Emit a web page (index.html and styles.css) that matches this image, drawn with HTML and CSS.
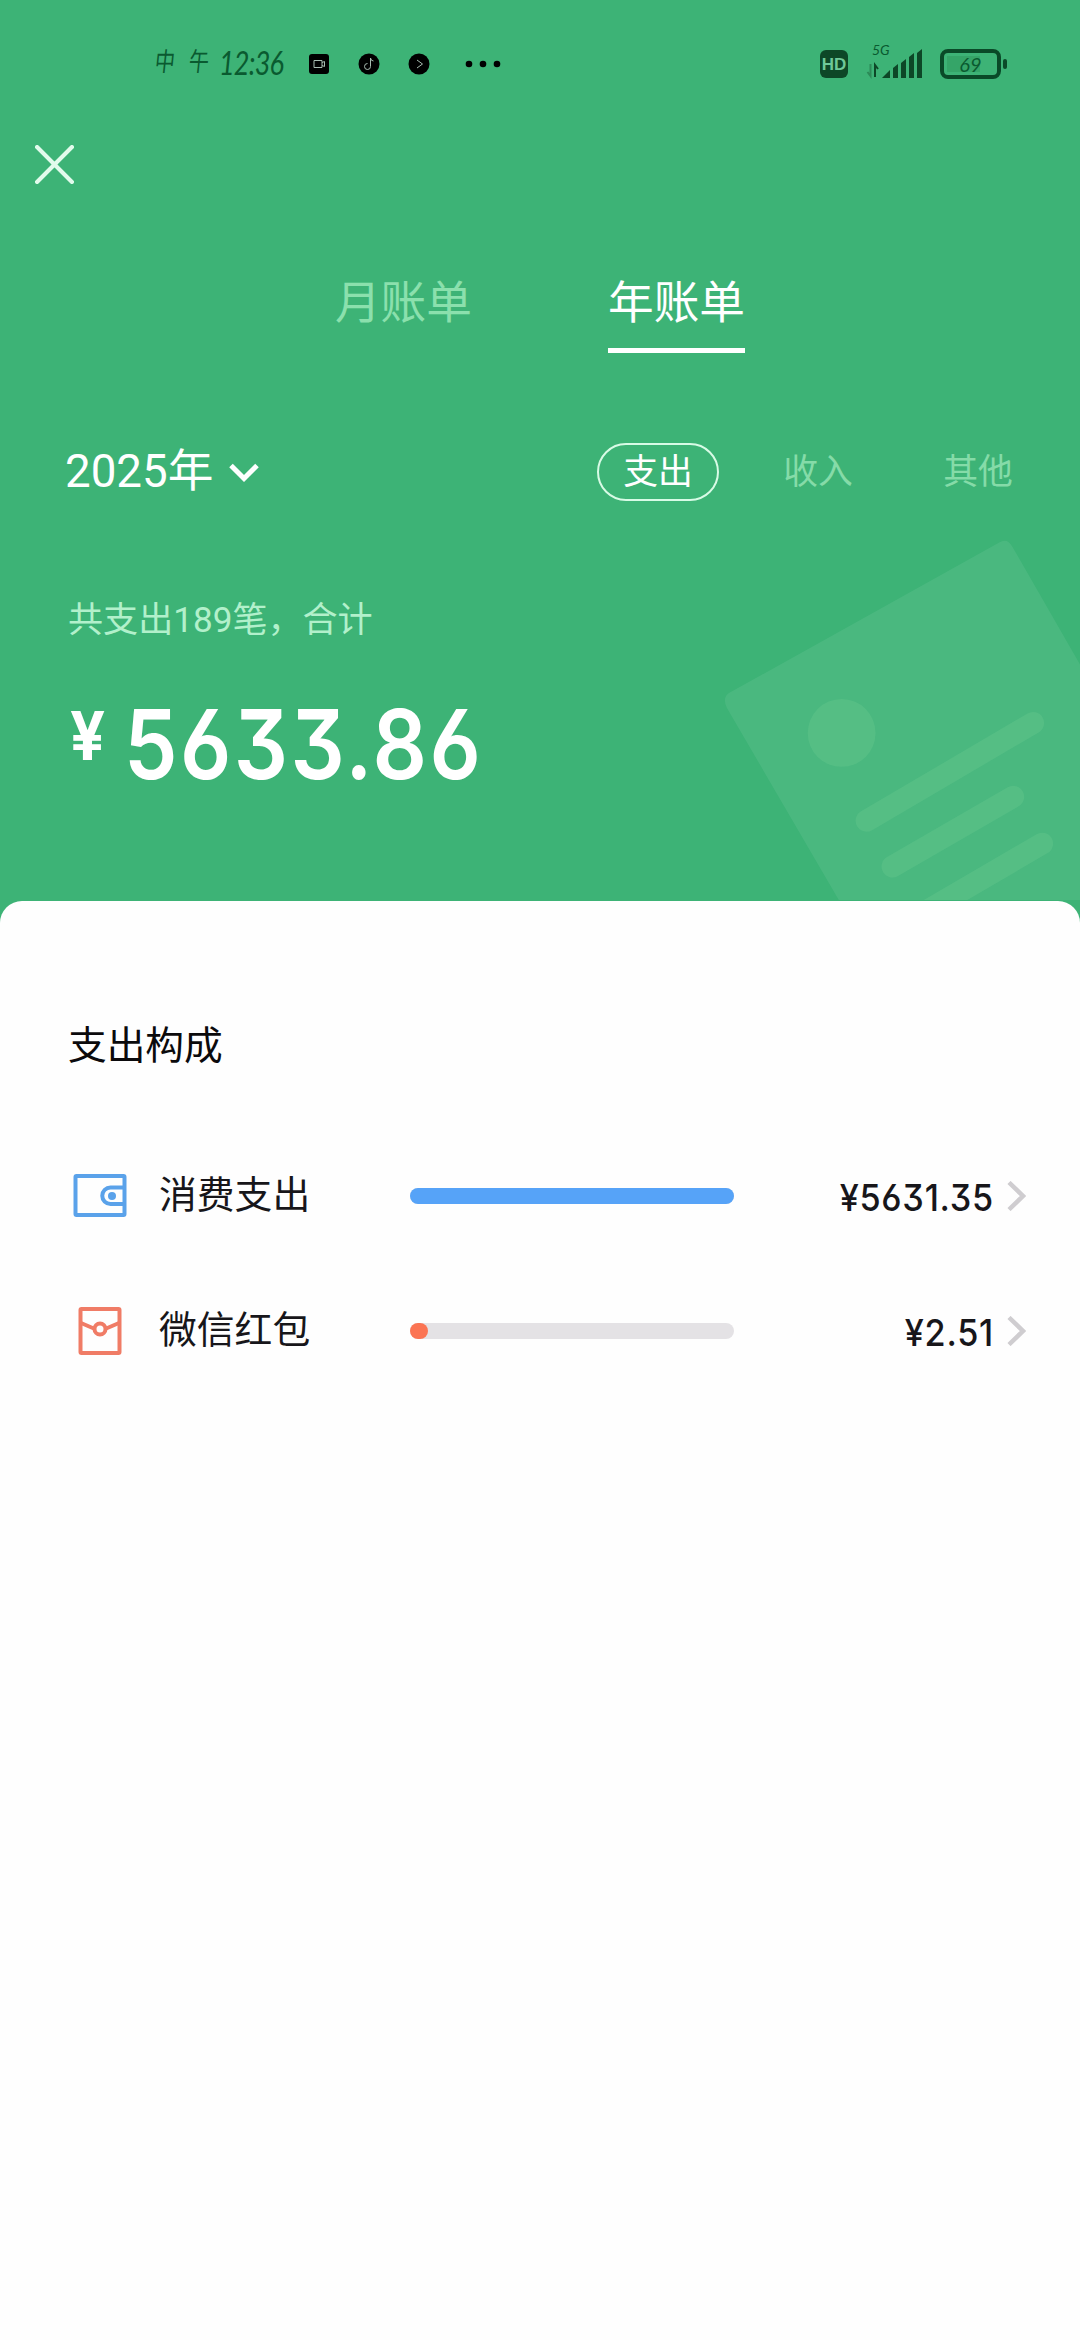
FILE: index.html
```html
<!DOCTYPE html>
<html lang="zh-CN">
<head>
<meta charset="utf-8">
<title>年账单</title>
<link rel="stylesheet" href="styles.css">
</head>
<body>
<div class="screen">
  <header class="hero">
    <svg class="paper" viewBox="0 0 370 380" aria-hidden="true">
      <path class="paper-sheet" d="M18 173 L289 22 Q297 17 302 26 L540 440 L256 600 L16 188 Q11 178 18 173Z"/>
      <circle class="paper-mark" cx="131" cy="213" r="34"/>
      <path class="paper-line" d="M156 301 L323 203 M182 347 L303 277 M195 404 L332 324"/>
    </svg>

    <div class="status">
      <div class="clock"><span class="daypart">中</span><span class="daypart">午</span><span class="time">12:36</span></div>
      <svg class="notices" viewBox="0 0 200 30" aria-hidden="true">
        <rect x="2" y="5" width="20" height="20" rx="3"/>
        <path class="glyph" d="M7 11.500h8v7h-8z M15 13.500l2.500-1v5l-2.500-1"/>
        <circle cx="62" cy="15" r="10.500"/>
        <path class="glyph" d="M63.500 9v8.500a3 3 0 1 1-3-3 M63.500 9q.5 3 3 3"/>
        <circle cx="112" cy="15" r="10.500"/>
        <path class="glyph" d="M110 11l5.500 4l-5.500 4"/>
        <circle cx="162" cy="15" r="3.300"/><circle cx="176" cy="15" r="3.300"/><circle cx="190" cy="15" r="3.300"/>
      </svg>
      <div class="system">
        <span class="hd">HD</span>
        <div class="signal">
          <span class="net">5G</span>
          <svg viewBox="0 0 58 32" aria-hidden="true">
            <path class="thin" d="M4.500 16v12l-3-4"/><path class="thin strong" d="M9 29V17l3 4"/>
            <path d="M16 30l8-8v8zM27 30v-10l5-4v14zM35 30v-15l5-4v19zM43 30V9l5-4v25zM51 30V5l5-4v29z"/>
          </svg>
        </div>
        <div class="battery"><span class="charge">69</span></div>
      </div>
    </div>

    <div class="nav">
      <svg class="close" viewBox="0 0 38 38" aria-label="关闭"><path d="M2 2L36 36M36 2L2 36"/></svg>
    </div>

    <nav class="tabs">
      <span class="tab">月账单</span>
      <span class="tab tab-on">年账单</span>
    </nav>

    <div class="filters">
      <div class="year"><span>2025年</span>
        <svg class="caret" viewBox="0 0 30 20" aria-hidden="true"><path d="M2 2.500L15 15.500L28 2.500"/></svg>
      </div>
      <div class="kinds">
        <span class="kind kind-on">支出</span>
        <span class="kind">收入</span>
        <span class="kind">其他</span>
      </div>
    </div>

    <div class="summary">共支出189笔，合计</div>
    <div class="total"><span class="yen">¥</span><span class="sum">5633.86</span></div>
  </header>

  <main class="sheet">
    <h2 class="title">支出构成</h2>
    <ul class="rows">
      <li class="row">
        <svg class="icon blue" viewBox="0 0 56 56" aria-hidden="true">
          <rect x="3.500" y="8" width="49" height="39" rx="1"/>
          <path d="M52 19.500H38.500a8.250 8.250 0 0 0 0 16.500H52"/><circle class="solid" cx="40" cy="28" r="4"/>
        </svg>
        <span class="label">消费支出</span>
        <div class="bar"><div class="fill fill-blue" style="width:100%"></div></div>
        <span class="value">¥5631.35</span>
        <svg class="arrow" viewBox="0 0 19 30" aria-hidden="true"><path d="M2 1.500L16 15L2 28.500"/></svg>
      </li>
      <li class="row">
        <svg class="icon red" viewBox="0 0 56 56" aria-hidden="true">
          <rect x="8.500" y="6" width="39" height="44" rx="1"/>
          <path d="M9 20l14 6M47 20l-14 6"/><circle cx="28" cy="26" r="5.500"/>
        </svg>
        <span class="label">微信红包</span>
        <div class="bar"><div class="fill fill-red" style="width:5.6%"></div></div>
        <span class="value">¥2.51</span>
        <svg class="arrow" viewBox="0 0 19 30" aria-hidden="true"><path d="M2 1.500L16 15L2 28.500"/></svg>
      </li>
    </ul>
  </main>
</div>
</body>
</html>
```
FILE: styles.css
```css
* { box-sizing: border-box; }
body {
  margin: 0;
  background: #3db376;
  font-family: Roboto, "Noto Sans CJK SC", sans-serif;
}
.screen {
  width: 1080px;
  height: 2340px;
  display: flex;
  flex-direction: column;
  overflow: hidden;
}
.hero {
  position: relative;
  height: 901px;
  flex: none;
  color: #fff;
}
.paper {
  position: absolute;
  left: 711px;
  top: 520px;
  width: 369px;
  height: 380px;
}
.paper-sheet { fill: rgba(255, 255, 255, .07); }
.paper-mark { fill: rgba(140, 225, 160, .16); }
.paper-line { fill: none; stroke: rgba(140, 225, 160, .16); stroke-width: 22; stroke-linecap: round; }

/* status bar */
.status {
  display: flex;
  align-items: center;
  height: 128px;
  padding: 0 73px 0 155px;
  color: #0a5a30;
}
.clock { display: flex; align-items: center; width: 152px; height: 30px; line-height: 30px; padding-bottom: 4px; }
.daypart { flex: none; width: 34px; font-size: 20px; transform: skewX(-6deg) scaleY(1.3); }
.time {
  font-family: Lato, sans-serif;
  font-style: italic;
  font-size: 33px;
  letter-spacing: -1px;
  margin-left: -4px;
  transform: scaleX(.82);
  transform-origin: left;
}
.notices { flex: none; width: 200px; height: 30px; fill: #000; }
.glyph { fill: none; stroke: #a9bdb2; stroke-width: 1; }
.system { display: flex; align-items: center; margin-left: auto; }
.hd {
  width: 28px;
  height: 28px;
  border-radius: 6px;
  background: #0d4727;
  color: #6fc898;
  font: 700 17px/29px "Liberation Sans", sans-serif;
  text-align: center;
}
.signal { position: relative; width: 58px; height: 32px; margin: 0 16px 0 18px; }
.signal svg { display: block; width: 58px; height: 32px; overflow: visible; fill: #0d4727; }
.thin { fill: none; stroke: #2c8a57; stroke-width: 2; }
.strong { stroke: #0d4727; }
.net { position: absolute; left: 6px; top: -8px; font: italic 400 14px/20px Lato, sans-serif; }
.battery {
  position: relative;
  width: 61px;
  height: 30px;
  padding: 3px;
  border: 4px solid #0a4a28;
  border-radius: 8px;
  margin-right: 6px;
  display: flex;
}
.battery::after {
  content: "";
  position: absolute;
  right: -10px;
  top: 6px;
  width: 4px;
  height: 10px;
  border-radius: 2px;
  background: #0a4a28;
}
.charge {
  flex: 1;
  background: linear-gradient(90deg, #35a568 70%, transparent 70%);
  font: italic 400 20px/16px Lato, sans-serif;
  text-align: center;
}

.nav { height: 72px; padding: 17px 0 0 35px; }
.close { display: block; width: 39px; height: 39px; fill: none; stroke: #e2fbec; stroke-width: 4; stroke-linecap: round; }

/* month / year tabs */
.tabs { display: flex; justify-content: center; gap: 136px; height: 153px; padding-top: 74px; }
.tab { height: 79px; font-size: 45.7px; line-height: 60px; color: #8be0ad; }
.tab-on { color: #fff; border-bottom: 5px solid #fff; }

.filters {
  display: flex;
  justify-content: space-between;
  align-items: center;
  height: 58px;
  margin: 90px 41px 0 65px;
}
.year { display: flex; align-items: center; gap: 16px; font-size: 45.7px; line-height: 57px; padding-bottom: 1px; }
.caret { width: 30px; height: 20px; margin-top: 2px; fill: none; stroke: #fff; stroke-width: 5; }
.kinds { display: flex; gap: 38px; }
.kind {
  width: 122px;
  height: 58px;
  font-size: 34.8px;
  line-height: 54px;
  text-align: center;
  border: 2px solid transparent;
  border-radius: 29px;
  color: #85dba8;
}
.kind-on { color: #fff; border-color: #d8fbe6; }

.summary { margin: 94px 0 0 68px; height: 50px; font-size: 35.1px; line-height: 50px; color: #b2f0cb; }
.total {
  display: flex;
  align-items: flex-start;
  height: 100px;
  margin: 49px 0 0 70px;
  font-family: Inter, sans-serif;
  font-feature-settings: "cv03", "cv04", "cv09";
}
.yen { width: 54px; font-size: 67px; line-height: 84px; font-weight: 700; transform: scaleX(.92); transform-origin: left; }
.sum {
  font-size: 96px;
  line-height: 100px;
  font-weight: 600;
  letter-spacing: 2.7px;
  transform: scaleX(.887);
  transform-origin: left;
}

/* breakdown */
.sheet { flex: 1; padding: 115px 54px 0 68px; background: #fefefe; border-radius: 22px 22px 0 0; color: #17161a; }
.title { margin: 0; height: 60px; font-size: 38.7px; line-height: 60px; font-weight: 400; color: #0b0a0c; }
.rows { margin: 52px 0 0; padding: 0; list-style: none; }
.row { display: flex; align-items: center; height: 135px; }
.icon { width: 56px; height: 56px; margin: 0 31px 0 4px; fill: none; stroke-width: 4; }
.blue { stroke: #5aa2ea; }
.blue .solid { fill: #5aa2ea; stroke: none; }
.red { stroke: #f07c66; }
.label { width: 251px; font-size: 37.8px; line-height: 60px; padding-bottom: 2px; }
.bar { width: 324px; height: 16px; border-radius: 8px; background: #e4e2e5; }
.fill { height: 16px; border-radius: 8px; }
.fill-blue { background: #56a3f8; }
.fill-red { background: #fb7453; }
.value {
  flex: 1;
  padding-top: 4px;
  text-align: right;
  font-family: Inter, sans-serif;
  font-feature-settings: "cv03", "cv04", "cv09";
  font-size: 37px;
  line-height: 44px;
  font-weight: 500;
  letter-spacing: .8px;
  transform: scaleX(.925);
  transform-origin: right;
}
.arrow { width: 19px; height: 30px; margin-left: 13px; fill: none; stroke: #cfcdd0; stroke-width: 4.5; }
```
